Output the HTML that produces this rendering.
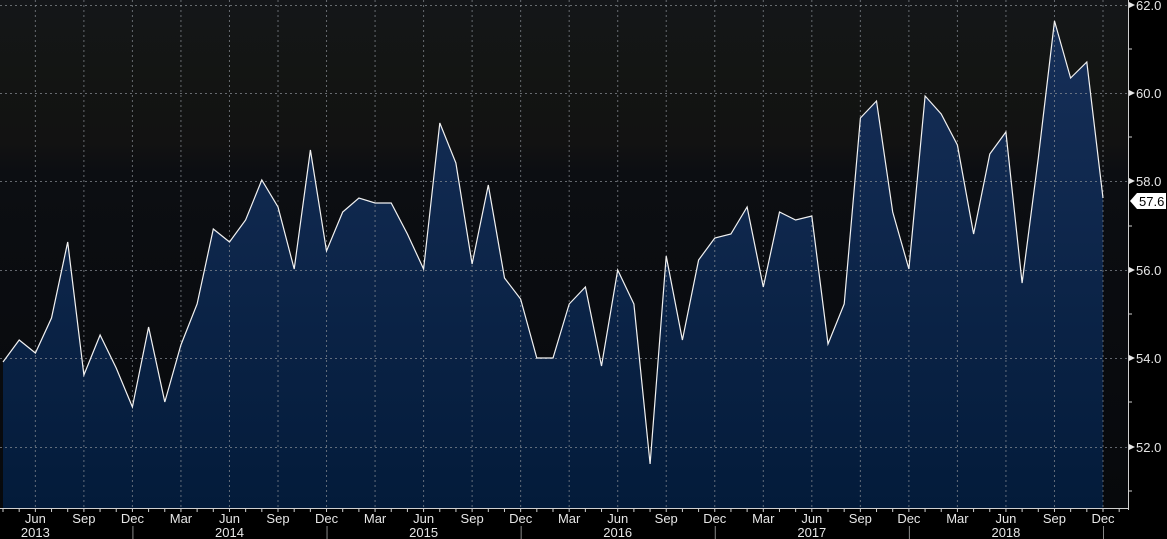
<!DOCTYPE html>
<html><head><meta charset="utf-8">
<style>
html,body{margin:0;padding:0;background:#000;width:1167px;height:539px;overflow:hidden}
svg{display:block}
text{font-family:"Liberation Sans","DejaVu Sans",sans-serif;font-size:13px;fill:#e6e6e6}
</style></head><body>
<svg id="c" width="1167" height="539" xmlns="http://www.w3.org/2000/svg">
<defs>
<linearGradient id="bg" x1="0" y1="0" x2="0" y2="1">
<stop offset="0" stop-color="#141619"/><stop offset="0.14" stop-color="#131513"/><stop offset="0.28" stop-color="#121212"/><stop offset="0.34" stop-color="#0c0e12"/><stop offset="1" stop-color="#07090c"/>
</linearGradient>
<linearGradient id="fill" x1="0" y1="0" x2="0" y2="508" gradientUnits="userSpaceOnUse">
<stop offset="0" stop-color="#17305a"/><stop offset="1" stop-color="#031b3a"/>
</linearGradient>
</defs>
<rect x="0" y="0" width="1128" height="508" fill="url(#bg)"/>
<g id="g"></g>
</svg>
<script>
var ys=[362,340,353,318,242,375,335,368,407,327,402,345,304,229,242,220,180,207,269,150,251,212,198,203,203,234,269,123,163,264,185,278,299,358,358,304,287,366,270,304,464,256,340,260,238,234,207,287,212,220,216,344,304,118,101,212,269,96,114,145,234,154,132,283,158,21,78,62,198];
var NS="http://www.w3.org/2000/svg",g=document.getElementById('g');
function el(t,a,txt){var e=document.createElementNS(NS,t);for(var k in a)e.setAttribute(k,a[k]);if(txt)e.textContent=txt;g.appendChild(e);return e;}
var step=1100/68,x0=3;
var pts=ys.map(function(y,i){return (x0+i*step).toFixed(1)+","+y;});
el('path',{d:"M"+x0+",508 L"+pts.join(" L")+" L1103,508 Z",fill:"url(#fill)"});
[5,93,181,270,358,447].forEach(function(y){el('line',{x1:0,x2:1128,y1:y+.5,y2:y+.5,stroke:"#8a8f96","stroke-width":1,"stroke-dasharray":"2,3",opacity:.7});});
var months=["Jan","Feb","Mar","Apr","May","Jun","Jul","Aug","Sep","Oct","Nov","Dec"];
for(var i=-3;i<72;i++){var x=x0+i*step;var m=((3+i)%12+12)%12;
 if(x<0||x>1127)continue;
 if(m==2||m==5||m==8||m==11){
  el('line',{x1:x,x2:x,y1:0,y2:508,stroke:"#8a8f96","stroke-dasharray":"2,3",opacity:.7});
  el('text',{x:x,y:523,"text-anchor":"middle"},months[m]);
 }
 el('line',{x1:x,x2:x,y1:508,y2:512,stroke:"#d0d0d0"});
 if(m==11){el('line',{x1:x+0.5,x2:x+0.5,y1:526,y2:539,stroke:"#888"});}
}
[2013,2014,2015,2016,2017,2018].forEach(function(yr,k){var x=x0+(2+12*k)*step;el('text',{x:x,y:537,"text-anchor":"middle"},yr);});
el('polyline',{points:pts.join(" "),fill:"none",stroke:"#f2f2f2","stroke-width":1.2});
el('line',{x1:0,x2:1128,y1:508.5,y2:508.5,stroke:"#cfcfcf"});
el('line',{x1:1128.5,x2:1128.5,y1:0,y2:510,stroke:"#cfcfcf"});
[[5,"62.0"],[93,"60.0"],[181,"58.0"],[270,"56.0"],[358,"54.0"],[447,"52.0"]].forEach(function(a){
 el('path',{d:"M1129,"+(a[0]-3)+" L1135,"+a[0]+" L1129,"+(a[0]+3)+"Z",fill:"#e6e6e6"});
 el('text',{x:1136,y:a[0]+5},a[1]);});
[49,137,226,314,402,491].forEach(function(y){el('line',{x1:1128,x2:1132,y1:y,y2:y,stroke:"#cfcfcf"});});
el('path',{d:"M1130,201 L1137,193 L1166,193 L1166,209 L1137,209 Z",fill:"#fff"});
el('text',{x:1139,y:206,style:"fill:#000;font-size:13px"},"57.6");
</script>
</body></html>
